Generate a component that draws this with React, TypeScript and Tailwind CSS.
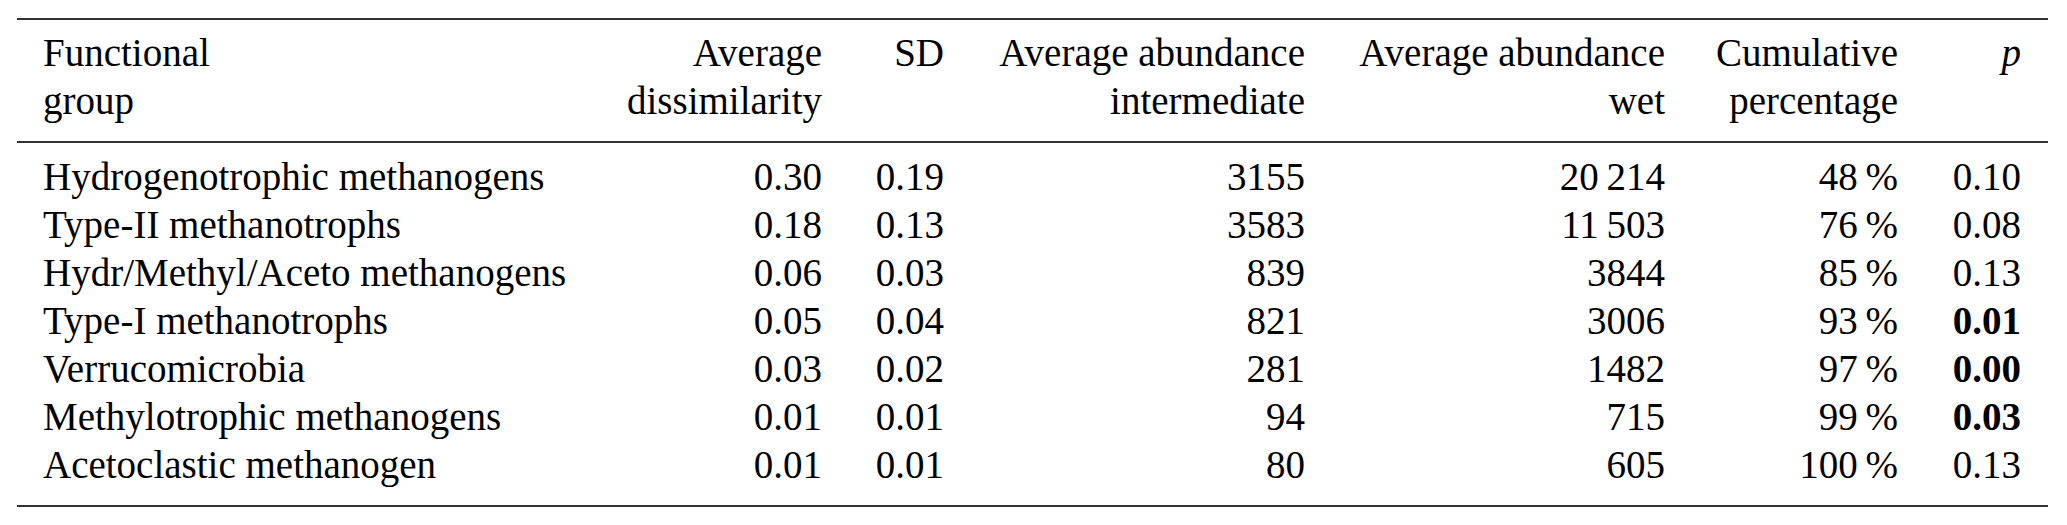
import React from "react";

const T = "\u2009";

type Row = {
  name: string;
  diss: string;
  sd: string;
  inter: string;
  wet: string;
  cum: string;
  p: string;
  bold?: boolean;
};

const rows: Row[] = [
  { name: "Hydrogenotrophic methanogens", diss: "0.30", sd: "0.19", inter: "3155", wet: `20${T}214`, cum: `48${T}%`, p: "0.10" },
  { name: "Type-II methanotrophs", diss: "0.18", sd: "0.13", inter: "3583", wet: `11${T}503`, cum: `76${T}%`, p: "0.08" },
  { name: "Hydr/Methyl/Aceto methanogens", diss: "0.06", sd: "0.03", inter: "839", wet: "3844", cum: `85${T}%`, p: "0.13" },
  { name: "Type-I methanotrophs", diss: "0.05", sd: "0.04", inter: "821", wet: "3006", cum: `93${T}%`, p: "0.01", bold: true },
  { name: "Verrucomicrobia", diss: "0.03", sd: "0.02", inter: "281", wet: "1482", cum: `97${T}%`, p: "0.00", bold: true },
  { name: "Methylotrophic methanogens", diss: "0.01", sd: "0.01", inter: "94", wet: "715", cum: `99${T}%`, p: "0.03", bold: true },
  { name: "Acetoclastic methanogen", diss: "0.01", sd: "0.01", inter: "80", wet: "605", cum: `100${T}%`, p: "0.13" },
];

const grid =
  "grid grid-cols-[500px_279px_122px_361px_360px_233px_123px]";

export default function App() {
  return (
    <div className="h-[525px] w-[2067px] bg-white text-black font-['Liberation_Serif']">
      <div className="pt-[18px] pl-[17px] pr-[19px]">
        <div className="border-t-2 border-b-2 border-[#333333] text-[39px] leading-[48px]">
          {/* header */}
          <div className={`${grid} pl-[26px] pr-[27px] pt-[9px] pb-[16px] border-b-2 border-[#333333]`}>
            <div className="text-left">
              Functional
              <br />
              group
            </div>
            <div className="text-right">
              Average
              <br />
              dissimilarity
            </div>
            <div className="text-right">SD</div>
            <div className="text-right">
              Average abundance
              <br />
              intermediate
            </div>
            <div className="text-right">
              Average abundance
              <br />
              wet
            </div>
            <div className="text-right">
              Cumulative
              <br />
              percentage
            </div>
            <div className="text-right italic">p</div>
          </div>
          {/* body */}
          <div className="pl-[26px] pr-[27px] pt-[10px] pb-[16px]">
            {rows.map((r) => (
              <div key={r.name} className={grid}>
                <div className="text-left whitespace-nowrap">{r.name}</div>
                <div className="text-right">{r.diss}</div>
                <div className="text-right">{r.sd}</div>
                <div className="text-right">{r.inter}</div>
                <div className="text-right">{r.wet}</div>
                <div className="text-right">{r.cum}</div>
                <div className={r.bold ? "text-right font-bold" : "text-right"}>{r.p}</div>
              </div>
            ))}
          </div>
        </div>
      </div>
    </div>
  );
}
